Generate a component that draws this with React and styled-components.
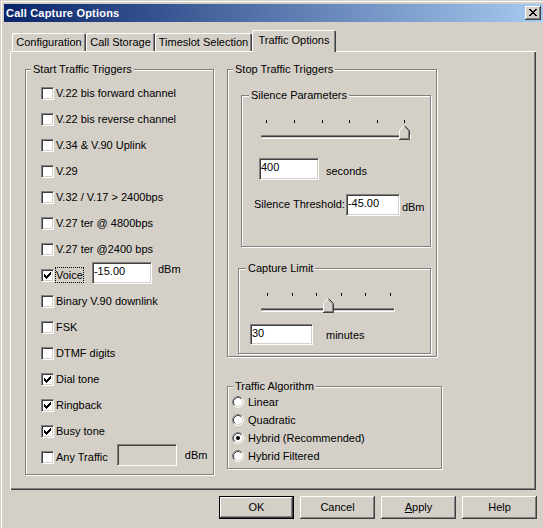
import React from "react";
import styled, { createGlobalStyle } from "styled-components";

const FACE = "#D4D0C8";
const HI = "#FFFFFF";
const SH = "#808080";
const DK = "#404040";

const GlobalStyle = createGlobalStyle`
  html, body { margin: 0; padding: 0; background: ${FACE}; overflow: hidden; }
  body { font-family: "Liberation Sans", Arial, sans-serif; font-size: 11px; color: #000; }
  *, *::before, *::after { box-sizing: border-box; }
`;

const Window = styled.div`
  width: 547px;
  height: 532px;
  padding: 4px;
  background: ${FACE};
  box-shadow: inset -1px -1px 0 ${DK}, inset -2px -2px 0 ${SH},
    inset 1px 1px 0 ${FACE}, inset 2px 2px 0 ${HI};
  display: flex;
  flex-direction: column;
`;

const TitleBar = styled.div`
  height: 18px;
  flex: none;
  display: flex;
  align-items: center;
  justify-content: space-between;
  padding: 0 2px;
  background: linear-gradient(to right, #0a246a, #a6caf0);
`;

const Title = styled.span`
  color: #fff;
  font-weight: bold;
  font-size: 11px;
  line-height: 13px;
  letter-spacing: 0.2px;
  white-space: nowrap;
`;

const CaptionButton = styled.div`
  width: 16px;
  height: 14px;
  background: ${FACE};
  box-shadow: inset -1px -1px 0 ${DK}, inset 1px 1px 0 ${HI},
    inset -2px -2px 0 ${SH}, inset 2px 2px 0 ${FACE};
  display: flex;
  align-items: center;
  justify-content: center;
  padding: 0 1px 1px 0;
`;

const Client = styled.div`
  padding: 8px 0 0 6px;
  display: flex;
  flex-direction: column;
`;

const TabStrip = styled.div`
  position: relative;
  z-index: 1;
  display: flex;
  align-items: flex-end;
  height: 21px;
  padding-left: 2px;
`;

const Tab = styled.div`
  width: ${(p) => p.$w}px;
  height: ${(p) => (p.$active ? 22 : 18)}px;
  margin-bottom: ${(p) => (p.$active ? -1 : 0)}px;
  padding-bottom: ${(p) => (p.$active ? 2 : 0)}px;
  background: ${FACE};
  border-top-left-radius: 2px;
  border-top-right-radius: 2px;
  box-shadow: inset 1px 1px 0 ${HI}, inset -1px 0 0 ${DK}, inset -2px 0 0 ${SH};
  display: flex;
  align-items: center;
  justify-content: center;
  line-height: 13px;
  white-space: nowrap;
`;

const TabPanel = styled.div`
  width: 526px;
  height: 439px;
  background: ${FACE};
  box-shadow: inset 1px 1px 0 ${HI}, inset -1px -1px 0 ${DK}, inset -2px -2px 0 ${SH};
  display: flex;
  align-items: flex-start;
  padding: 18px 0 0 15px;
`;

const Column = styled.div`
  display: flex;
  flex-direction: column;
  align-items: flex-start;
  margin-left: ${(p) => p.$ml || 0}px;
`;

const GroupFrame = styled.div`
  position: relative;
  flex: none;
  width: ${(p) => p.$w}px;
  height: ${(p) => p.$h}px;
  margin: ${(p) => p.$m || "0"};
  padding: ${(p) => p.$pad || "0"};
  border: 1px solid ${SH};
  box-shadow: inset 1px 1px 0 ${HI}, 1px 1px 0 ${HI};
  display: flex;
  flex-direction: column;
  align-items: flex-start;
`;

const Legend = styled.span`
  position: absolute;
  top: -7px;
  left: ${(p) => p.$lx || 5}px;
  padding: 0 2px;
  background: ${FACE};
  line-height: 13px;
  white-space: nowrap;
`;

const GroupBox = ({ label, lx, children, ...rest }) => (
  <GroupFrame {...rest}>
    <Legend $lx={lx}>{label}</Legend>
    {children}
  </GroupFrame>
);

const CheckRow = styled.div`
  display: flex;
  align-items: flex-start;
  height: 26px;
`;

const Sunken = styled.div`
  flex: none;
  border: 1px solid;
  border-color: ${SH} ${HI} ${HI} ${SH};
  box-shadow: inset 1px 1px 0 ${DK}, inset -1px -1px 0 ${FACE};
`;

const CheckBoxBox = styled(Sunken)`
  width: 13px;
  height: 13px;
  margin-top: 6px;
  background: #fff;
  display: flex;
`;

const CheckLabel = styled.span`
  margin: 4px 0 0 1px;
  height: 16px;
  line-height: 14px;
  border: 1px dotted ${(p) => (p.$focus ? "#000" : "transparent")};
  white-space: nowrap;
`;

const TextBox = styled(Sunken)`
  width: ${(p) => p.$w}px;
  height: ${(p) => p.$h || 22}px;
  margin: ${(p) => p.$m || "0"};
  padding: 2px 0 0 1px;
  line-height: 13px;
  background: ${(p) => (p.$disabled ? FACE : "#fff")};
  white-space: nowrap;
  overflow: hidden;
`;

const Text = styled.span`
  margin: ${(p) => p.$m || "0"};
  line-height: 13px;
  white-space: nowrap;
`;

const FieldRow = styled.div`
  display: flex;
  align-items: flex-start;
  margin: ${(p) => p.$m || "0"};
`;

const SliderSvg = styled.svg`
  display: block;
  flex: none;
  margin: ${(p) => p.$m || "0"};
`;

const RadioRow = styled.div`
  display: flex;
  align-items: center;
  height: 18px;
  padding-left: 4px;
`;

const RadioSvg = styled.svg`
  display: block;
  flex: none;
`;

const RadioLabel = styled.span`
  margin-left: 4px;
  line-height: 13px;
  white-space: nowrap;
`;

const ButtonRow = styled.div`
  width: 527px;
  display: flex;
  justify-content: flex-end;
  gap: 6px;
  margin-top: 6px;
`;

const PushButton = styled.div`
  width: 75px;
  height: 23px;
  background: ${FACE};
  border: ${(p) => (p.$default ? "1px solid #000" : "none")};
  box-shadow: inset -1px -1px 0 ${DK}, inset 1px 1px 0 ${HI},
    inset -2px -2px 0 ${SH}, inset 2px 2px 0 ${FACE};
  display: flex;
  align-items: center;
  justify-content: center;
  line-height: 13px;
  padding-bottom: 1px;
`;

const Underline = styled.span`
  text-decoration: underline;
`;

const CHECK = [[9], [8, 9], [3, 7, 8, 9], [3, 4, 6, 7, 8], [3, 4, 5, 6, 7], [4, 5, 6], [5]];
const CLOSE = [
  [0, 1, 6, 7],
  [1, 2, 5, 6],
  [2, 3, 4, 5],
  [3, 4],
  [2, 3, 4, 5],
  [1, 2, 5, 6],
  [0, 1, 6, 7],
];

const CheckBox = ({ checked }) => (
  <CheckBoxBox>
    {checked && (
      <svg width="11" height="11" viewBox="0 0 11 11" shapeRendering="crispEdges">
        {CHECK.map((row, y) =>
          row.map((x) => <rect key={`${x}-${y}`} x={x - 1} y={y + 2} width="1" height="1" fill="#000" />)
        )}
      </svg>
    )}
  </CheckBoxBox>
);

const CloseGlyph = () => (
  <svg width="8" height="7" viewBox="0 0 8 7" shapeRendering="crispEdges">
    {CLOSE.map((row, y) =>
      row.map((x) => <rect key={`${x}-${y}`} x={x} y={y} width="1" height="1" fill="#000" />)
    )}
  </svg>
);

const Radio = ({ checked }) => (
  <RadioSvg width="12" height="12" viewBox="0 0 12 12">
    <circle cx="6" cy="6" r="5" fill="#fff" />
    <path d="M2.11 9.89 A5.5 5.5 0 0 1 9.89 2.11" fill="none" stroke={SH} strokeWidth="1" />
    <path d="M9.89 2.11 A5.5 5.5 0 0 1 2.11 9.89" fill="none" stroke={HI} strokeWidth="1" />
    <path d="M2.82 9.18 A4.5 4.5 0 0 1 9.18 2.82" fill="none" stroke={DK} strokeWidth="1" />
    <path d="M9.18 2.82 A4.5 4.5 0 0 1 2.82 9.18" fill="none" stroke={FACE} strokeWidth="1" />
    {checked && <circle cx="6" cy="6" r="2" fill="#000" />}
  </RadioSvg>
);

const Slider = ({ width, trackW, ticks, thumb, m }) => (
  <SliderSvg $m={m} width={width} height="22" viewBox={`0 0 ${width} 22`} shapeRendering="crispEdges">
    {ticks.map((x) => (
      <rect key={x} x={x} y="1" width="1" height="3" fill="#000" />
    ))}
    <rect x="2" y="16" width={trackW} height="1" fill={SH} />
    <rect x="3" y="17" width={trackW - 2} height="1" fill={DK} />
    <rect x="3" y="18" width={trackW - 2} height="1" fill={FACE} />
    <rect x="2" y="19" width={trackW} height="1" fill={HI} />
    <rect x="2" y="16" width="1" height="3" fill={SH} />
    <rect x={trackW + 1} y="16" width="1" height="4" fill={HI} />
    <g transform={`translate(${thumb},6)`}>
      <polygon points="0,5 5,0 10,5 10,14 0,14" fill={FACE} shapeRendering="auto" />
      <polyline points="0.5,14 0.5,5.5 5.5,0.5" fill="none" stroke={HI} strokeWidth="1" shapeRendering="auto" />
      <polyline points="5.5,0.5 10.5,5.5 10.5,14.5 0,14.5" fill="none" stroke={DK} strokeWidth="1" shapeRendering="auto" />
      <polyline points="5.5,1.9 9.5,5.9 9.5,13.5 1,13.5" fill="none" stroke={SH} strokeWidth="1" shapeRendering="auto" />
    </g>
  </SliderSvg>
);

const START = [
  { label: "V.22 bis forward channel" },
  { label: "V.22 bis reverse channel" },
  { label: "V.34 & V.90 Uplink" },
  { label: "V.29" },
  { label: "V.32 / V.17 > 2400bps" },
  { label: "V.27 ter @ 4800bps" },
  { label: "V.27 ter @2400 bps" },
  { label: "Voice", checked: true, focus: true, input: { w: 60, value: "-15.00", ml: 8 }, unit: { ml: 6, mt: 0 } },
  { label: "Binary  V.90 downlink" },
  { label: "FSK" },
  { label: "DTMF digits" },
  { label: "Dial tone", checked: true },
  { label: "Ringback", checked: true },
  { label: "Busy tone", checked: true },
  { label: "Any Traffic", input: { w: 60, value: "", ml: 8, disabled: true }, unit: { ml: 8, mt: 4 } },
];

const ALGOS = [
  { label: "Linear" },
  { label: "Quadratic" },
  { label: "Hybrid (Recommended)", checked: true },
  { label: "Hybrid Filtered" },
];

const TABS = [
  { label: "Configuration", w: 74 },
  { label: "Call Storage", w: 69 },
  { label: "Timeslot Selection", w: 97 },
  { label: "Traffic Options", w: 84, active: true },
];

export default function App() {
  return (
    <>
      <GlobalStyle />
      <Window>
        <TitleBar>
          <Title>Call Capture Options</Title>
          <CaptionButton>
            <CloseGlyph />
          </CaptionButton>
        </TitleBar>
        <Client>
          <TabStrip>
            {TABS.map((t) => (
              <Tab key={t.label} $w={t.w} $active={t.active}>
                {t.label}
              </Tab>
            ))}
          </TabStrip>
          <TabPanel>
            <GroupBox label="Start Traffic Triggers" $w={189} $h={406} $pad="11px 0 0 15px">
              {START.map((r) => (
                <CheckRow key={r.label}>
                  <CheckBox checked={r.checked} />
                  <CheckLabel $focus={r.focus}>{r.label}</CheckLabel>
                  {r.input && (
                    <TextBox $w={r.input.w} $m={`-1px 0 0 ${r.input.ml}px`} $disabled={r.input.disabled}>
                      {r.input.value}
                    </TextBox>
                  )}
                  {r.unit && <Text $m={`${r.unit.mt}px 0 0 ${r.unit.ml}px`}>dBm</Text>}
                </CheckRow>
              ))}
            </GroupBox>
            <Column $ml={13}>
              <GroupBox label="Stop Traffic Triggers" $w={210} $h={288}>
                <GroupBox label="Silence Parameters" lx={7} $w={190} $h={152} $m="25px 0 0 13px">
                  <Slider
                    m="23px 0 0 17px"
                    width={154}
                    trackW={150}
                    ticks={[7, 35, 63, 90, 118, 145]}
                    thumb={140}
                  />
                  <FieldRow $m="17px 0 0 17px">
                    <TextBox $w={60}>400</TextBox>
                    <Text $m="7px 0 0 7px">seconds</Text>
                  </FieldRow>
                  <FieldRow $m="14px 0 0 12px">
                    <Text $m="4px 0 0 0">Silence Threshold:</Text>
                    <TextBox $w={54} $m="0 0 0 1px">-45.00</TextBox>
                    <Text $m="7px 0 0 2px">dBm</Text>
                  </FieldRow>
                </GroupBox>
                <GroupBox label="Capture Limit" lx={7} $w={193} $h={86} $m="21px 0 0 10px">
                  <Slider
                    m="23px 0 0 20px"
                    width={138}
                    trackW={134}
                    ticks={[8, 33, 57, 82, 106, 131]}
                    thumb={64}
                  />
                  <FieldRow $m="10px 0 0 11px">
                    <TextBox $w={63} $h={21}>30</TextBox>
                    <Text $m="5px 0 0 13px">minutes</Text>
                  </FieldRow>
                </GroupBox>
              </GroupBox>
              <GroupBox label="Traffic Algorithm" $w={215} $h={83} $m="29px 0 0 0" $pad="6px 0 0 0">
                {ALGOS.map((a) => (
                  <RadioRow key={a.label}>
                    <Radio checked={a.checked} />
                    <RadioLabel>{a.label}</RadioLabel>
                  </RadioRow>
                ))}
              </GroupBox>
            </Column>
          </TabPanel>
          <ButtonRow>
            <PushButton $default>OK</PushButton>
            <PushButton>Cancel</PushButton>
            <PushButton>
              <Underline>A</Underline>pply
            </PushButton>
            <PushButton>Help</PushButton>
          </ButtonRow>
        </Client>
      </Window>
    </>
  );
}
